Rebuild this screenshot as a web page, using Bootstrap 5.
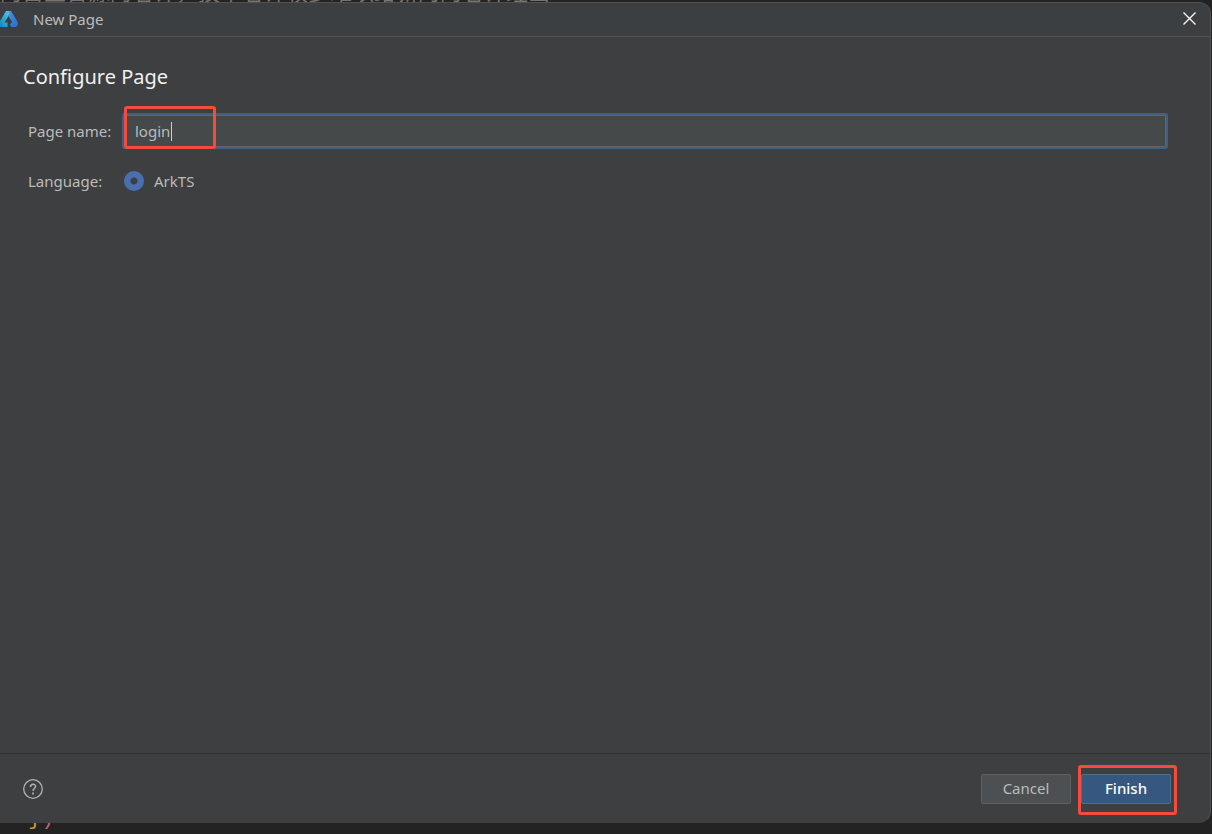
<!DOCTYPE html>
<html lang="en">
<head>
<meta charset="utf-8">
<meta name="viewport" content="width=device-width, initial-scale=1">
<title>New Page</title>
<link href="https://cdn.jsdelivr.net/npm/bootstrap@5.3.0/dist/css/bootstrap.min.css" rel="stylesheet">
<style>
body{background:#232323;color:#bbb;font-family:"Noto Sans","Noto Sans CJK SC",sans-serif;font-size:15px;line-height:20px}
.code-top{height:2px;font-size:22px;line-height:22px;color:#77736d}
.code-bottom{height:11px;padding-left:28px;font:22px/22px "Liberation Mono",monospace}
.code-bottom span{margin-top:-15px}
.brace{color:#d09a2c}
.paren{color:#c0607c}
.dialog-window{background:#3e3f41;border:1px solid #505152;border-left:0;border-bottom-color:#3e3f41;border-radius:0 12px 12px 0;margin-right:1px}
.title-bar{background:#3c3f41;border-bottom:1px solid #525354;height:34px;padding-bottom:2px;border-top-right-radius:11px}
.title-bar .logo{width:18px;height:18px}
.title-text{margin-left:15px}
.close-btn{width:42px;height:31px;color:#fff;background:none;border:0}
.page-title{font-size:20px;line-height:28px;color:#f0f0f0;font-weight:400}
.form-area{padding:26px 44px 0 23px}
.field-label{width:101px;padding-left:5px}
.name-input,.name-input:focus{height:32px;background:#45494a;border:1px solid #646464;border-radius:1px;color:#bbb;font-size:15px;padding:0 10px;box-shadow:0 0 0 2px #3d6185}
.caret{left:47px;top:7px;width:1px;height:19px;background:#ccc}
.marker{border:3px solid #f44b3e;border-radius:3px;pointer-events:none}
.marker-name{left:0;top:-9px;width:92px;height:43px}
.marker-finish{inset:-9px -6px -11px -3px}
.lang-radio{appearance:none;width:20px;height:20px;border-radius:50%;border:0;background:radial-gradient(circle,#3c3f41 3px,#4b6eaf 4px)}
.lang-text{margin-left:10px}
.footer-bar{border-top:1px solid #323232;padding:20px 39px 18px 23px}
.action-btn{width:90px;height:30px;padding:0 0 2px;font-size:15px;line-height:20px;border-radius:2px;color:#bbb;background:#4c5052;border:1px solid #5e6060}
.action-primary{background:#365880;border-color:#4c708c;color:#fff;font-weight:500}
.finish-wrap{margin-left:10px}
.help-btn{width:20px;height:20px;color:#afb1b3}
</style>
</head>
<body class="d-flex flex-column vh-100 overflow-hidden">
<div class="code-top overflow-hidden flex-shrink-0 text-nowrap d-flex align-items-end" aria-hidden="true"><span>的首主合源的者计，技术者计较多难以给新的的者计经出</span></div>
<main class="dialog-window flex-grow-1 d-flex flex-column">
  <header class="title-bar d-flex align-items-center justify-content-between flex-shrink-0">
    <div class="d-flex align-items-center">
      <svg class="logo" viewBox="0 0 18 18" aria-hidden="true">
        <defs><linearGradient id="cyan" x1="0" y1="1" x2="1" y2="0"><stop stop-color="#1688bd"/><stop offset="1" stop-color="#43d5e8"/></linearGradient><linearGradient id="blue" x2="1" y2="1"><stop stop-color="#3c9ae6"/><stop offset="1" stop-color="#3564d0"/></linearGradient></defs>
        <path d="M6 1h4.500l.5 1-6.500 10.500h3V17H0v-6z" fill="url(#cyan)"/>
        <path d="M8.500 1H11l7 11.500V15l-2 2h-4.500l-1.500-2.500 1.500-2h1L8 5.500l1.500-2.500z" fill="url(#blue)"/>
      </svg>
      <span class="title-text">New Page</span>
    </div>
    <button class="close-btn d-flex align-items-center justify-content-center p-0" aria-label="Close"><svg width="13" height="13" viewBox="0 0 13 13" stroke="currentColor" stroke-width="1.3"><path d="M.5.5l12 12M12.5.5l-12 12"/></svg></button>
  </header>
  <form class="d-flex flex-column flex-grow-1">
    <div class="form-area flex-grow-1">
      <h1 class="page-title mb-4">Configure Page</h1>
      <div class="d-flex align-items-center mb-4">
        <label class="field-label flex-shrink-0" for="name">Page name:</label>
        <div class="position-relative flex-grow-1">
          <input class="form-control name-input" id="name" value="login">
          <span class="caret position-absolute"></span>
          <span class="marker marker-name position-absolute"></span>
        </div>
      </div>
      <div class="d-flex align-items-center">
        <span class="field-label flex-shrink-0">Language:</span>
        <input class="lang-radio" type="radio" name="lang" id="arkts" checked>
        <label for="arkts" class="lang-text">ArkTS</label>
      </div>
    </div>
    <footer class="footer-bar d-flex align-items-center">
      <button type="button" class="help-btn btn p-0 border-0 d-flex me-auto" aria-label="Help"><svg width="20" height="20" viewBox="0 0 20 20" fill="none" stroke="currentColor"><circle cx="10" cy="10" r="9.3" stroke-width="1.3"/><path d="M7.5 8c0-3.600 5-3.600 5-.5 0 2-2.500 2-2.500 4.500" stroke-width="1.500"/><path d="M10 13.500v2" stroke-width="1.700"/></svg></button>
      <button type="button" class="btn action-btn">Cancel</button>
      <div class="finish-wrap position-relative">
        <button type="submit" class="btn action-btn action-primary">Finish</button>
        <span class="marker marker-finish position-absolute"></span>
      </div>
    </footer>
  </form>
</main>
<div class="code-bottom overflow-hidden flex-shrink-0 d-flex" aria-hidden="true"><span class="brace">}</span><span class="paren">)</span></div>
<script src="https://cdn.jsdelivr.net/npm/bootstrap@5.3.0/dist/js/bootstrap.bundle.min.js"></script>
</body>
</html>
